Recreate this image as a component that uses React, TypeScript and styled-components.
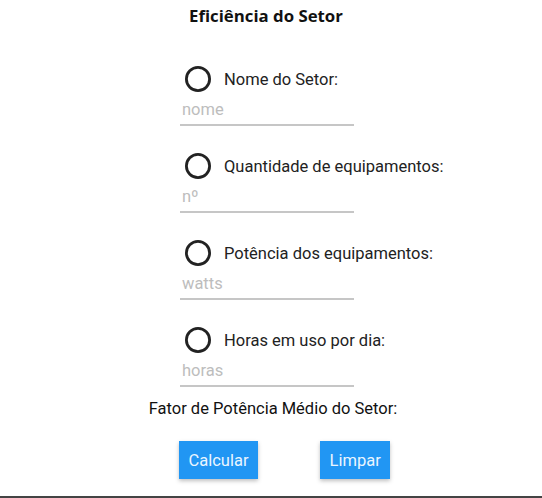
import styled, { createGlobalStyle } from 'styled-components';

const GlobalStyle = createGlobalStyle`
  html, body {
    margin: 0;
    padding: 0;
    background: #ffffff;
  }
  body {
    font-family: Roboto, 'Liberation Sans', sans-serif;
    color: #222222;
  }
`;

const Page = styled.div`
  width: 542px;
  height: 498px;
  display: flex;
  flex-direction: column;
  align-items: center;
  overflow: hidden;
`;

const Title = styled.h1`
  margin: 0;
  margin-right: 10px;
  height: 32px;
  line-height: 32px;
  font-family: 'Open Sans', sans-serif;
  font-size: 16.8px;
  font-weight: 700;
  color: #111111;
`;

const Form = styled.div`
  width: 182px;
  margin-top: 34px;
  display: flex;
  flex-direction: column;
  gap: 27px;
`;

const Field = styled.div`
  display: flex;
  flex-direction: column;
  gap: 3px;
`;

const LabelRow = styled.label`
  display: flex;
  align-items: center;
  gap: 13px;
  height: 26px;
  padding-left: 5px;
  white-space: nowrap;
  font-size: 16.5px;
  color: #222222;
`;

const RadioIcon = styled.svg`
  flex: none;
  width: 26px;
  height: 26px;
`;

const Input = styled.input`
  box-sizing: border-box;
  width: 174px;
  height: 31px;
  padding: 0 2px;
  border: none;
  border-bottom: 2px solid #c6c6c6;
  outline: none;
  font-family: Roboto, 'Liberation Sans', sans-serif;
  font-size: 16.5px;
  color: #222222;
  background: transparent;
  &::placeholder {
    color: #bdbdbd;
  }
`;

const Result = styled.div`
  margin-top: 12px;
  margin-left: 4px;
  line-height: 20px;
  font-size: 16.5px;
  color: #111111;
`;

const Buttons = styled.div`
  width: 182px;
  margin-top: 22px;
  display: flex;
  gap: 62px;
  padding-right: 2px;
`;

const Button = styled.button`
  height: 38px;
  padding: 0 9.5px;
  border: none;
  border-radius: 0;
  background: #2196f3;
  color: #eaf5ff;
  font-family: Roboto, 'Liberation Sans', sans-serif;
  font-size: 16.5px;
  box-shadow: 0 2px 4px rgba(0, 0, 0, 0.25);
  cursor: pointer;
`;

const Divider = styled.div`
  width: 100%;
  height: 2px;
  margin-top: 17px;
  background: #444444;
  flex: none;
`;

const Radio = () => (
  <RadioIcon viewBox="0 0 26 26">
    <circle cx="13" cy="13" r="11.6" fill="none" stroke="#222222" strokeWidth="2.8" />
  </RadioIcon>
);

const fields = [
  { label: 'Nome do Setor:', placeholder: 'nome' },
  { label: 'Quantidade de equipamentos:', placeholder: 'nº' },
  { label: 'Potência dos equipamentos:', placeholder: 'watts' },
  { label: 'Horas em uso por dia:', placeholder: 'horas' },
];

const App = () => {
  return (
    <Page>
      <GlobalStyle />
      <Title>Eficiência do Setor</Title>
      <Form>
        {fields.map((f) => (
          <Field key={f.label}>
            <LabelRow>
              <Radio />
              {f.label}
            </LabelRow>
            <Input placeholder={f.placeholder} />
          </Field>
        ))}
      </Form>
      <Result>Fator de Potência Médio do Setor:</Result>
      <Buttons>
        <Button>Calcular</Button>
        <Button>Limpar</Button>
      </Buttons>
      <Divider />
    </Page>
  );
};

export default App;
